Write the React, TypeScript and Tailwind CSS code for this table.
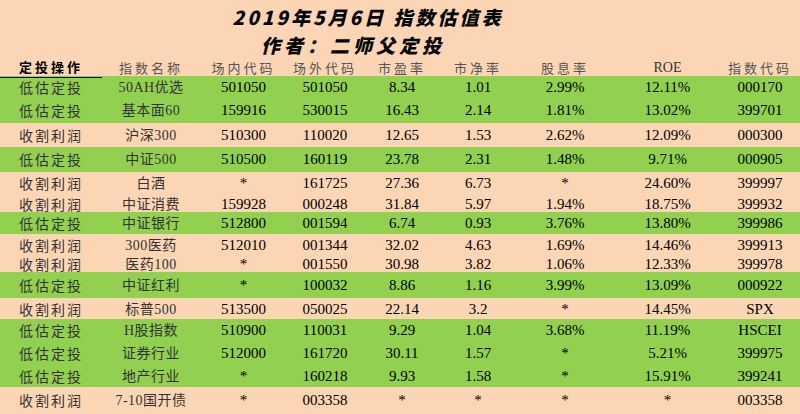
import React from 'react';

type Row = {
  op: string;
  name: string;
  inCode: string;
  outCode: string;
  pe: string;
  pb: string;
  div: string;
  roe: string;
  code: string;
  h: string;
};

const rows: Row[] = [
  { op: '低估定投', name: '50AH优选', inCode: '501050', outCode: '501050', pe: '8.34', pb: '1.01', div: '2.99%', roe: '12.11%', code: '000170', h: 'h-[22px]' },
  { op: '低估定投', name: '基本面60', inCode: '159916', outCode: '530015', pe: '16.43', pb: '2.14', div: '1.81%', roe: '13.02%', code: '399701', h: 'h-[25px]' },
  { op: '收割利润', name: '沪深300', inCode: '510300', outCode: '110020', pe: '12.65', pb: '1.53', div: '2.62%', roe: '12.09%', code: '000300', h: 'h-[24px]' },
  { op: '低估定投', name: '中证500', inCode: '510500', outCode: '160119', pe: '23.78', pb: '2.31', div: '1.48%', roe: '9.71%', code: '000905', h: 'h-[25px]' },
  { op: '收割利润', name: '白酒', inCode: '*', outCode: '161725', pe: '27.36', pb: '6.73', div: '*', roe: '24.60%', code: '399997', h: 'h-[21px]' },
  { op: '收割利润', name: '中证消费', inCode: '159928', outCode: '000248', pe: '31.84', pb: '5.97', div: '1.94%', roe: '18.75%', code: '399932', h: 'h-[19px]' },
  { op: '低估定投', name: '中证银行', inCode: '512800', outCode: '001594', pe: '6.74', pb: '0.93', div: '3.76%', roe: '13.80%', code: '399986', h: 'h-[22px]' },
  { op: '收割利润', name: '300医药', inCode: '512010', outCode: '001344', pe: '32.02', pb: '4.63', div: '1.69%', roe: '14.46%', code: '399913', h: 'h-[19px]' },
  { op: '收割利润', name: '医药100', inCode: '*', outCode: '001550', pe: '30.98', pb: '3.82', div: '1.06%', roe: '12.33%', code: '399978', h: 'h-[19px]' },
  { op: '低估定投', name: '中证红利', inCode: '*', outCode: '100032', pe: '8.86', pb: '1.16', div: '3.99%', roe: '13.09%', code: '000922', h: 'h-[26px]' },
  { op: '收割利润', name: '标普500', inCode: '513500', outCode: '050025', pe: '22.14', pb: '3.2', div: '*', roe: '14.45%', code: 'SPX', h: 'h-[21px]' },
  { op: '低估定投', name: 'H股指数', inCode: '510900', outCode: '110031', pe: '9.29', pb: '1.04', div: '3.68%', roe: '11.19%', code: 'HSCEI', h: 'h-[23px]' },
  { op: '低估定投', name: '证券行业', inCode: '512000', outCode: '161720', pe: '30.11', pb: '1.57', div: '*', roe: '5.21%', code: '399975', h: 'h-[23px]' },
  { op: '低估定投', name: '地产行业', inCode: '*', outCode: '160218', pe: '9.93', pb: '1.58', div: '*', roe: '15.91%', code: '399241', h: 'h-[22px]' },
  { op: '收割利润', name: '7-10国开债', inCode: '*', outCode: '003358', pe: '*', pb: '*', div: '*', roe: '*', code: '003358', h: 'h-[27px]' },
];

const grid = 'grid grid-cols-[102px_98px_87px_76px_78px_74px_100px_105px_80px] items-center text-center';
const serif = "font-['Liberation_Serif','Noto_Sans_CJK_SC',serif]";
const cjk = "font-['Noto_Sans_CJK_SC',sans-serif]";

export default function App() {
  const headers = ['指数名称', '场内代码', '场外代码', '市盈率', '市净率', '股息率'];

  return (
    <div className="w-[800px] h-[414px] overflow-hidden bg-[#fcd5b4] text-black">
      {/* Title */}
      <div className={`h-[57px] flex flex-col items-center pt-[5px] ${cjk} italic font-black`}>
        <div className="text-[19px] leading-[24px] tracking-[3px] ml-[-64px]">2019年5月6日 指数估值表</div>
        <div className="text-[19px] leading-[27px] pt-[2px] tracking-[4px] ml-[-94px]">作者：二师父定投</div>
      </div>

      {/* Header */}
      <div className={`${grid} h-[19px] text-[13px] text-[#555]`}>
        <div className={`${cjk} font-bold text-black tracking-[3px] h-full leading-[19px] border-b border-black`}>定投操作</div>
        {headers.map((h) => (
          <div key={h} className={`${cjk} tracking-[3px]`}>{h}</div>
        ))}
        <div className={`${serif} text-[14px] text-[#333]`}>ROE</div>
        <div className={`${cjk} tracking-[3px]`}>指数代码</div>
      </div>

      {/* Rows */}
      {rows.map((r, i) => (
        <div
          key={i}
          className={`${grid} ${r.h} ${r.op === '低估定投' ? 'bg-[#92d050]' : 'bg-[#fcd5b4]'} text-[15px]`}
        >
          <div className={`${cjk} text-[14px] tracking-[2px] text-[#333]`}>{r.op}</div>
          <div className={`${serif} text-[14px] tracking-[0.5px] text-[#333]`}>{r.name}</div>
          <div className={serif}>{r.inCode}</div>
          <div className={serif}>{r.outCode}</div>
          <div className={serif}>{r.pe}</div>
          <div className={serif}>{r.pb}</div>
          <div className={serif}>{r.div}</div>
          <div className={serif}>{r.roe}</div>
          <div className={serif}>{r.code}</div>
        </div>
      ))}
    </div>
  );
}
